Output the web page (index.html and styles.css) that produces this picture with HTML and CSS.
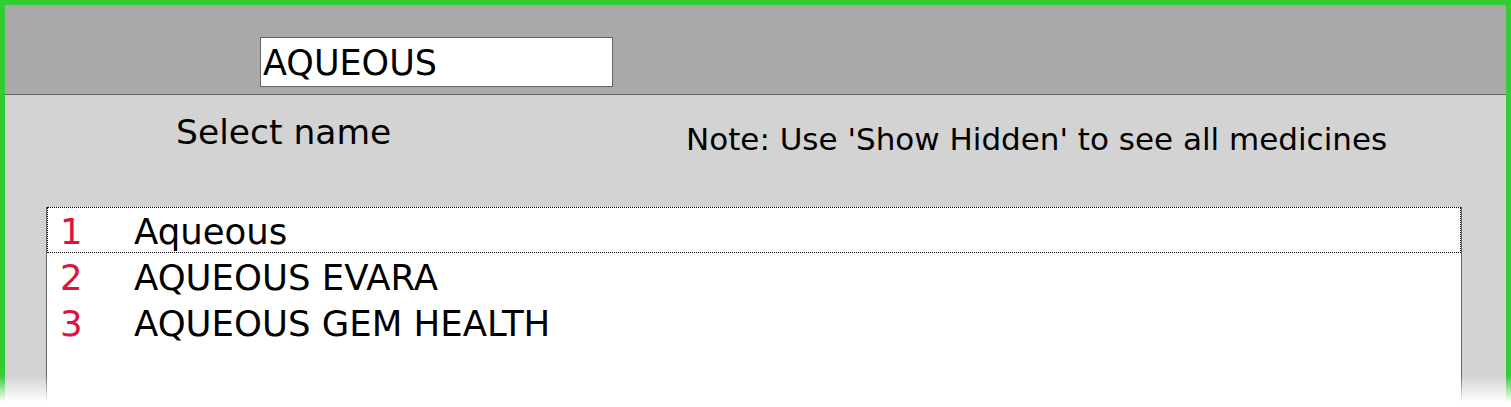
FILE: index.html
```html
<!DOCTYPE html>
<html lang="en">
<head>
  <meta charset="UTF-8" />
  <title>Select medicine</title>
  <link rel="stylesheet" href="styles.css">
</head>
<body>

<div class="frame">
  <div class="search-bar">
    <input class="search-input" type="text" value="AQUEOUS">
  </div>

  <div class="panel">
    <div class="panel-head">
      <div class="select-label">Select name</div>
      <div class="note">Note: Use 'Show Hidden' to see all medicines</div>
    </div>

    <div class="name-list">
      <div class="row current"><span class="num">1</span><span class="name">Aqueous</span></div>
      <div class="row"><span class="num">2</span><span class="name">AQUEOUS EVARA</span></div>
      <div class="row"><span class="num">3</span><span class="name">AQUEOUS GEM HEALTH</span></div>
    </div>
  </div>
</div>

<div class="fade"></div>

</body>
</html>
```

FILE: styles.css
```css
* { box-sizing: border-box; }
html, body { height: 100%; }
body {
  margin: 0;
  font-family: "DejaVu Sans", Verdana, sans-serif;
  color: #000;
  overflow: hidden;
}
.frame {
  height: 100%;
  border: 5px solid #32cd32;
  border-bottom: none;
  background: #d3d3d3;
  display: flex;
  flex-direction: column;
}
.search-bar {
  height: 90px;
  background: #a9a9a9;
  border-bottom: 1px solid #666;
  padding: 32px 0 0 255px;
  flex-shrink: 0;
}
.search-input {
  width: 353px;
  height: 50px;
  border: 1px solid #666;
  background: #fff;
  padding: 2px 2px 0;
  font-family: inherit;
  font-size: 35px;
  color: #000;
  outline: none;
}
.panel {
  flex: 1;
  display: flex;
  flex-direction: column;
  padding: 0 44px 0 41px;
}
.panel-head {
  height: 112px;
  display: flex;
  flex-shrink: 0;
}
.select-label {
  font-size: 34.5px;
  line-height: 40px;
  padding: 17px 0 0 130px;
  width: 640px;
}
.note {
  font-size: 31px;
  line-height: 36px;
  padding-top: 26px;
}
.name-list {
  flex: 1;
  background: #fff;
  border-left: 1px solid #666;
  border-right: 1px solid #666;
}
.row {
  height: 46px;
  display: flex;
  align-items: center;
  font-size: 35.5px;
  padding-top: 2px;
  border: 1px solid transparent;
}
.row.current { border: 1px dotted #000; }
.num {
  color: #dc143c;
  width: 86px;
  padding-left: 12px;
}
.fade {
  position: fixed;
  left: 0;
  right: 0;
  bottom: 0;
  height: 32px;
  background: linear-gradient(rgba(255,255,255,0), #fff 85%);
  pointer-events: none;
}
```
